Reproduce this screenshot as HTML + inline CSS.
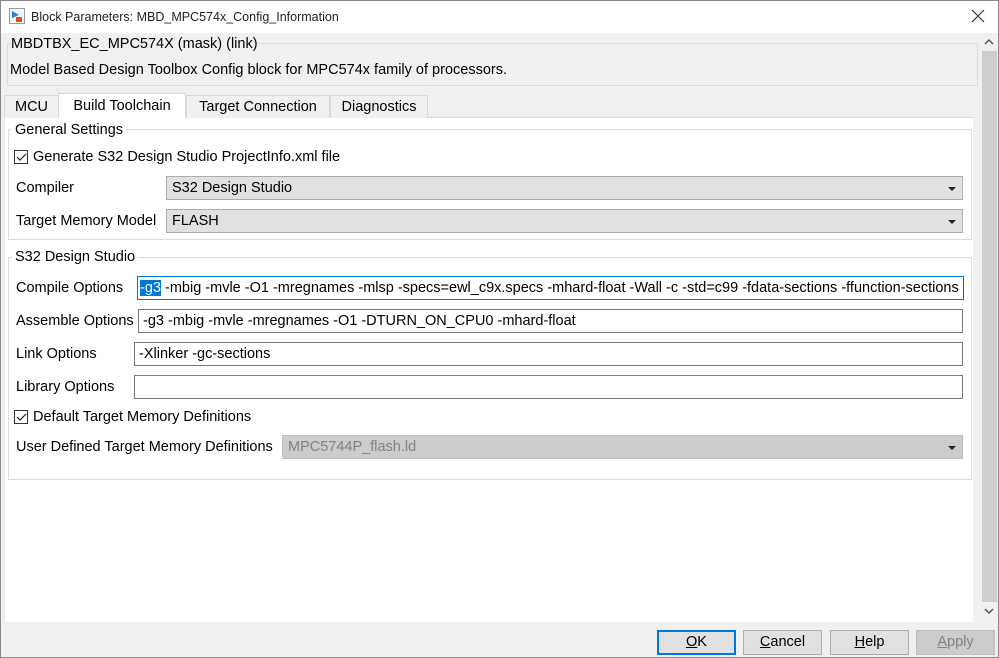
<!DOCTYPE html>
<html><head><style>
*{box-sizing:border-box;margin:0;padding:0}
body{width:999px;height:658px;position:relative;overflow:hidden;background:#f0f0f0;font-family:"Liberation Sans",sans-serif;font-size:14.5px;color:#000}
.a{position:absolute;white-space:nowrap}
.lbl{position:absolute;white-space:nowrap;line-height:20px}
.edit{position:absolute;background:#fff;border:1px solid #7a7a7a;height:24px;line-height:22px;padding-left:4px;overflow:hidden;white-space:nowrap}
.combo{position:absolute;background:#e1e1e1;border:1px solid #adadad;height:24px;line-height:22px;padding-left:5px;white-space:nowrap}
.combo:after{content:"";position:absolute;right:6px;top:10px;border-left:4px solid transparent;border-right:4px solid transparent;border-top:4px solid #222}
.cb{position:absolute;width:14px;height:14px;border:1px solid #333;background:#fff}
.grp{position:absolute;border:1px solid #dcdcdc}
.gt{position:absolute;background:#fff;padding:0 3px;line-height:18px}
.btn{position:absolute;top:630px;width:79px;height:25px;background:#e1e1e1;border:1px solid #adadad;text-align:center;line-height:23px}
.tab{position:absolute;top:95px;height:23px;border:1px solid #d9d9d9;border-bottom:none;background:#f0f0f0;text-align:center;line-height:22px}
</style></head><body>
<div class="a" style="left:0;top:0;width:999px;height:658px;border:1px solid #888"></div>
<div class="a" style="left:1px;top:1px;width:997px;height:32px;background:#fff"></div>
<svg class="a" style="left:9px;top:8px" width="16" height="16"><rect x="0.5" y="0.5" width="15" height="15" fill="#f4f4f4" stroke="#999"/><path d="M3 3 L10 7 L3 10 Z" fill="#2a7fd4"/><rect x="7" y="9" width="6" height="5" fill="#d9531e"/></svg>
<div class="a" style="left:31px;top:8px;line-height:18px;font-size:12.5px;color:#222">Block Parameters: MBD_MPC574x_Config_Information</div>
<svg class="a" style="left:971px;top:9px" width="14" height="14"><path d="M1 1L13 13M13 1L1 13" stroke="#333" stroke-width="1.2"/></svg>
<div class="a" style="left:981px;top:33px;width:17px;height:589px;background:#f0f0f0"></div>
<div class="a" style="left:982px;top:51px;width:15px;height:551px;background:#cdcdcd"></div>
<svg class="a" style="left:984px;top:38px" width="10" height="8"><path d="M1 6L5 2L9 6" stroke="#555" fill="none" stroke-width="1.5"/></svg>
<svg class="a" style="left:984px;top:607px" width="10" height="8"><path d="M1 2L5 6L9 2" stroke="#555" fill="none" stroke-width="1.5"/></svg>
<div class="a" style="left:7px;top:43px;width:971px;height:43px;border:1px solid #dcdcdc"></div>
<div class="a" style="left:11px;top:35px;line-height:18px;background:#f0f0f0">MBDTBX_EC_MPC574X (mask) (link)</div>
<div class="a" style="left:10px;top:61px;line-height:18px">Model Based Design Toolbox Config block for MPC574x family of processors.</div>
<div class="a" style="left:4px;top:117px;width:969px;height:505px;background:#fff;border-top:1px solid #d9d9d9;border-left:1px solid #e6e6e6"></div>
<div class="tab" style="left:4px;width:55px">MCU</div>
<div class="tab" style="left:58px;top:93px;height:25px;width:128px;background:#fff;line-height:24px">Build Toolchain</div>
<div class="tab" style="left:186px;width:144px">Target Connection</div>
<div class="tab" style="left:330px;width:98px">Diagnostics</div>
<div class="grp" style="left:8px;top:129px;width:964px;height:111px"></div>
<div class="gt" style="left:12px;top:121px">General Settings</div>
<div class="cb" style="left:14px;top:150px"></div>
<svg class="a" style="left:16px;top:153px" width="11" height="9"><path d="M1 4L4 7L10 1" stroke="#222" fill="none" stroke-width="1.2"/></svg>
<div class="lbl" style="left:33px;top:147px">Generate S32 Design Studio ProjectInfo.xml file</div>
<div class="lbl" style="left:16px;top:178px">Compiler</div>
<div class="combo" style="left:166px;top:176px;width:797px">S32 Design Studio</div>
<div class="lbl" style="left:16px;top:211px">Target Memory Model</div>
<div class="combo" style="left:166px;top:209px;width:797px">FLASH</div>
<div class="grp" style="left:8px;top:257px;width:964px;height:223px"></div>
<div class="gt" style="left:12px;top:248px">S32 Design Studio</div>
<div class="lbl" style="left:16px;top:278px">Compile Options</div>
<div class="edit" style="left:137px;top:276px;width:827px;border-color:#0078d7;padding-left:2px"><span style="background:#0078d7;color:#fff">-g3</span> -mbig -mvle -O1 -mregnames -mlsp -specs=ewl_c9x.specs -mhard-float -Wall -c -std=c99 -fdata-sections -ffunction-sections</div>
<div class="lbl" style="left:16px;top:311px">Assemble Options</div>
<div class="edit" style="left:138px;top:309px;width:825px">-g3 -mbig -mvle -mregnames -O1 -DTURN_ON_CPU0 -mhard-float</div>
<div class="lbl" style="left:16px;top:344px">Link Options</div>
<div class="edit" style="left:134px;top:342px;width:829px">-Xlinker -gc-sections</div>
<div class="lbl" style="left:16px;top:377px">Library Options</div>
<div class="edit" style="left:134px;top:375px;width:829px"></div>
<div class="cb" style="left:14px;top:410px"></div>
<svg class="a" style="left:16px;top:413px" width="11" height="9"><path d="M1 4L4 7L10 1" stroke="#222" fill="none" stroke-width="1.2"/></svg>
<div class="lbl" style="left:33px;top:407px">Default Target Memory Definitions</div>
<div class="lbl" style="left:16px;top:437px">User Defined Target Memory Definitions</div>
<div class="combo" style="left:282px;top:435px;width:681px;background:#cccccc;border-color:#bfbfbf;color:#838383">MPC5744P_flash.ld</div>
<div class="btn" style="left:657px;border:1px solid #0078d7;box-shadow:inset 0 0 0 1px #0078d7"><u>O</u>K</div>
<div class="btn" style="left:743px"><u>C</u>ancel</div>
<div class="btn" style="left:830px"><u>H</u>elp</div>
<div class="btn" style="left:916px;background:#cccccc;border-color:#bfbfbf;color:#838383"><u>A</u>pply</div>
</body></html>
